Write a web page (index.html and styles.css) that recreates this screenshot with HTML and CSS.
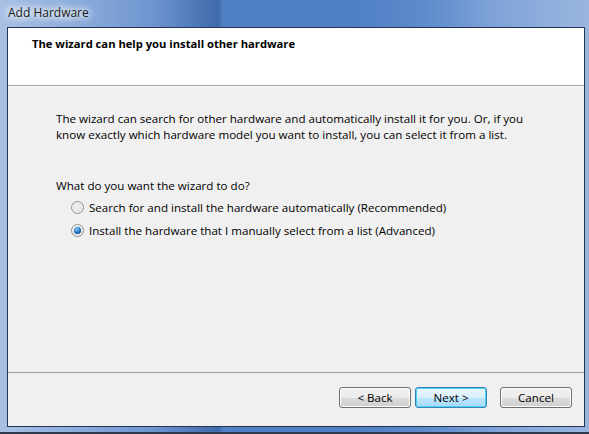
FILE: index.html
```html
<!DOCTYPE html>
<html lang="en">
<head>
  <meta charset="UTF-8">
  <title>Add Hardware</title>
  <link rel="stylesheet" href="styles.css">
</head>
<body>
  <div class="window">
    <div class="titlebar">Add Hardware</div>
    <div class="client">
      <div class="header">
        <h1>The wizard can help you install other hardware</h1>
      </div>

      <div class="content">
        <p class="intro">The wizard can search for other hardware and automatically install it for you. Or, if you know exactly which hardware model you want to install, you can select it from a list.</p>

        <p class="question">What do you want the wizard to do?</p>

        <label class="option">
          <span class="radio"></span>
          Search for and install the hardware automatically (Recommended)
        </label>
        <label class="option">
          <span class="radio checked"></span>
          Install the hardware that I manually select from a list (Advanced)
        </label>
      </div>

      <div class="footer">
        <button class="btn">&lt; Back</button>
        <button class="btn default">Next &gt;</button>
        <button class="btn cancel">Cancel</button>
      </div>
    </div>
  </div>
</body>
</html>
```

FILE: styles.css
```css
html, body {
  margin: 0;
  height: 100%;
}
body {
  font-family: 'Open Sans', 'Noto Sans', sans-serif;
  font-size: 11.6px;
  color: #000;
  background: #2c3a4c;
  overflow: hidden;
}
.window {
  width: 589px;
  height: 432px;
  box-sizing: border-box;
  padding: 0 4px 5px 7px;
  display: flex;
  flex-direction: column;
  background:
    linear-gradient(90deg, #a9c1e5 0%, #8eaedc 12%, #6e95d0 26%, #3f6aab 37%, #5081c6 38%, #4f80c5 60%, #5d8bcc 72%, #7fa3d8 84%, #9ab6df 100%);
}
.titlebar {
  height: 27px;
  line-height: 26px;
  padding-left: 1px;
  font-size: 12px;
  color: #1a1a1a;
  text-shadow: 0 0 6px #fff, 0 0 8px #fff, 0 0 10px #fff;
}
.client {
  flex: 1;
  display: flex;
  flex-direction: column;
  border: 1px solid #233550;
  background: #f0f0f0;
}
.header {
  height: 58px;
  background: #fff;
  border-bottom: 1px solid #a0a0a0;
  box-sizing: border-box;
  padding: 8px 0 0 24px;
}
.header h1 {
  margin: 0;
  font-size: 11.2px;
  font-weight: bold;
  line-height: 16px;
}
.content {
  flex: 1;
  padding: 24px 30px 0 48px;
  border-top: 1px solid #fff;
}
.intro {
  margin: 0;
  line-height: 16px;
}
.question {
  margin: 35px 0 2px;
  line-height: 16px;
}
.option {
  display: flex;
  align-items: center;
  gap: 5px;
  height: 23px;
  padding-left: 15px;
}
.radio {
  width: 11px;
  height: 11px;
  border-radius: 50%;
  border: 1px solid #8e8f8f;
  background: radial-gradient(circle at 50% 40%, #f4f4f4 0%, #dcdcdc 70%, #cfcfcf 100%);
  box-shadow: inset 0 0 0 1px #f6f6f6;
  position: relative;
}
.radio.checked::after {
  content: "";
  position: absolute;
  left: 2px;
  top: 2px;
  width: 7px;
  height: 7px;
  border-radius: 50%;
  background: radial-gradient(circle at 40% 35%, #8dd3ff 0%, #1b69b3 55%, #0f3e78 100%);
}
.footer {
  height: 49px;
  border-top: 1px solid #a0a0a0;
  display: flex;
  align-items: center;
  justify-content: flex-end;
  gap: 4px;
  padding: 0 12px 4px 0;
}
.btn {
  width: 72px;
  height: 21px;
  padding: 0;
  font-family: inherit;
  font-size: 11.6px;
  color: #000;
  border: 1px solid #707070;
  border-radius: 3px;
  background: linear-gradient(#f2f2f2 0%, #ebebeb 50%, #dddddd 51%, #cfcfcf 100%);
  box-shadow: inset 0 0 0 1px #fcfcfc;
}
.btn.default {
  border-color: #3c7fb1;
  box-shadow: inset 0 0 0 1px #48d7f9;
  background: linear-gradient(#eaf6fd 0%, #d9f0fc 50%, #bee6fd 51%, #a7d9f5 100%);
}
.btn.cancel {
  margin-left: 9px;
}
```
